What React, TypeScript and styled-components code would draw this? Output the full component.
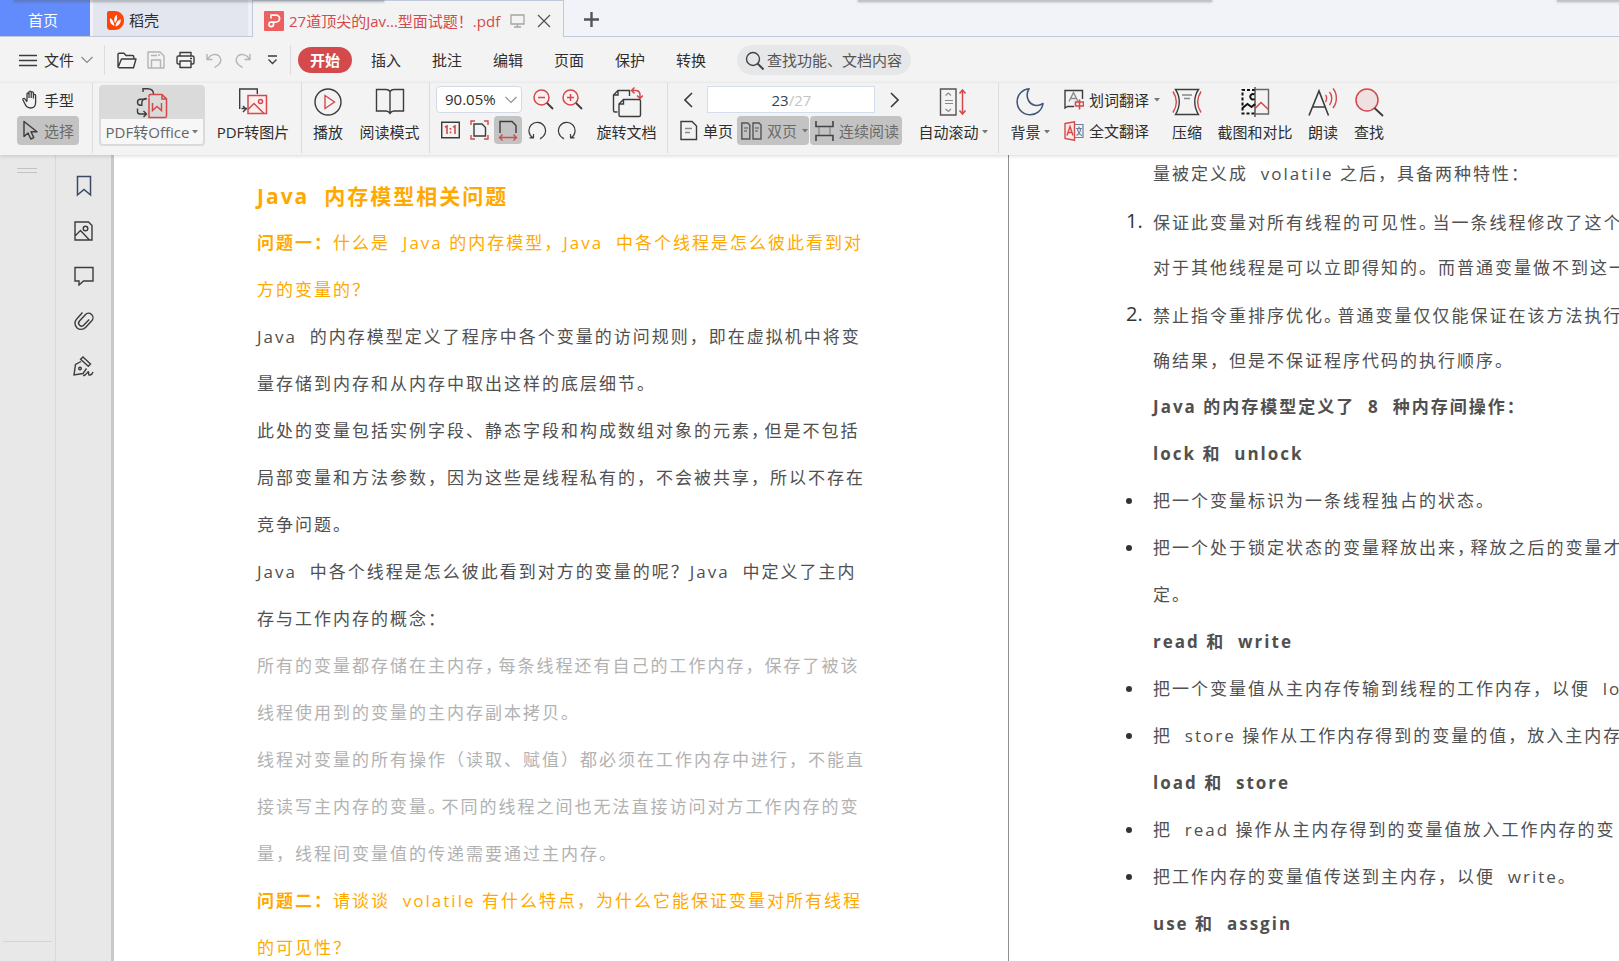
import React from "react";
import styled, { createGlobalStyle, css } from "styled-components";

const INK = "#3c3c3c";
const RED = "#d44a4c";
const FAINT = "#b4b4b4";

const GlobalStyle = createGlobalStyle`
  *, *::before, *::after { box-sizing: border-box; }
  body {
    margin: 0;
    background: #f3f3f3;
    color: #2e2e2e;
    font: 15px/20px "Open Sans", "Noto Sans CJK SC", sans-serif;
  }
  button, input, select { font: inherit; color: inherit; }
  button { padding: 0; border: 0; background: none; cursor: pointer; white-space: nowrap; }
  h1, h2, p, ol, ul { margin: 0; padding: 0; }
  svg { display: block; flex: none; }
`;

/* ---------- icons ---------- */

type SvgProps = { w: number; h: number; color?: string; sw?: number; children: React.ReactNode };

const Svg = ({ w, h, color = INK, sw = 1.4, children }: SvgProps) => (
  <svg width={w} height={h} viewBox={`0 0 ${w} ${h}`} fill="none" stroke={color} strokeWidth={sw} aria-hidden="true">
    {children}
  </svg>
);

const DocerLogo = () => (
  <svg width="17" height="19" viewBox="0 0 17 19" aria-hidden="true">
    <path d="M2 0h6c5 0 9 4 9 9.500s-4 9.500-9 9.500H3c-1.600 0-3-1.400-3-3V2c0-1.100.9-2 2-2z" fill="#ff4405" />
    <path d="M7.500 15C3.500 13.500 2.500 10.500 3 7c2.500 1.500 4 4 4.500 8zM8 12C6.500 9 7 6 9.500 3.500c1.200 3 .8 6-1.500 8.500zM8.500 15.500c.3-4 2-6.300 5.300-7.300.2 3.600-1.600 6.300-5.300 7.300z" fill="#fff" />
  </svg>
);

const PdfLogo = () => (
  <svg width="20" height="20" viewBox="0 0 20 20" fill="none" aria-hidden="true">
    <rect width="20" height="20" rx="1" fill="#ee5f5f" />
    <path d="M7 7.500V4.200h5.200a3.400 3.400 0 0 1 0 6.800H9.500v2.500a2.300 2.300 0 1 1-2.300-2.400H12" stroke="#fff" strokeWidth="1.700" />
  </svg>
);

const MonitorIcon = () => (
  <Svg w={15} h={14} color="#a5a5a5" sw={1.3}><path d="M1 1h13v9H1zM7.500 10v3M4 13h7" /></Svg>
);
const CloseIcon = () => (
  <Svg w={14} h={14} color="#555" sw={1.3}><path d="M1 1l12 12M13 1L1 13" /></Svg>
);
const PlusIcon = () => (
  <Svg w={15} h={15} color="#555" sw={2.4}><path d="M7.500 0v15M0 7.500h15" /></Svg>
);
const MenuIcon = () => (
  <Svg w={18} h={13} sw={1.4}><path d="M0 1.500h18M0 6.500h18M0 11.500h18" /></Svg>
);
const ChevronDown = ({ color = "#888" }: { color?: string }) => (
  <Svg w={12} h={8} color={color} sw={1.2}><path d="M.5 1l5.500 5.500L11.500 1" /></Svg>
);
const FolderIcon = () => (
  <Svg w={20} h={17}><path d="M1 15.500V2.500c0-.8.500-1.300 1.300-1.300H7L9 3.500h6.500c.8 0 1.300.5 1.300 1.300V7M1 15.500L4.500 7H19l-2.500 8.700H1.500" strokeLinejoin="round" /></Svg>
);
const SaveIcon = () => (
  <Svg w={18} h={18} color={FAINT}><path d="M1 1h12l4 4v12H1zM4.500 17V9h9v8M4 4.500h6M12 3v2" strokeLinejoin="round" /></Svg>
);
const PrintIcon = () => (
  <Svg w={19} h={18}><path d="M4 5V1.500h11V5M4 13H2.500C1.600 13 1 12.400 1 11.500v-5C1 5.600 1.600 5 2.500 5h14c.9 0 1.500.6 1.500 1.500v5c0 .9-.6 1.500-1.500 1.500H15M4 10h11v6.500H4zM14 7.500h2" strokeLinejoin="round" /></Svg>
);
const UndoIcon = ({ flip = false }: { flip?: boolean }) => (
  <Svg w={16} h={15} color={FAINT}>
    <g transform={flip ? "matrix(-1 0 0 1 16 0)" : undefined}><path d="M1 1v5.500h5.500M1.500 6C5 1 10 .5 12.800 2.800c3 2.600 2.500 6.700-.3 8.900L8.500 14.500" /></g>
  </Svg>
);
const MoreIcon = () => (
  <Svg w={11} h={10} sw={1.3}><path d="M1 1h9M1.500 4.500l4 4 4-4" /></Svg>
);
const SearchIcon = () => (
  <Svg w={19} h={19} color="#444"><circle cx="8" cy="8" r="6.500" /><path d="M12.500 12.500l6 6" strokeWidth="2" /></Svg>
);
const CaretIcon = () => (
  <svg width="6" height="4" viewBox="0 0 6 4" aria-hidden="true"><path d="M0 0h6L3 3.500z" fill="#777" /></svg>
);
const HandIcon = () => (
  <Svg w={17} h={19} sw={1.3}><path d="M5 11V4.200c0-1.600 2-1.600 2 0V8M7 8V2.300c0-1.700 2.200-1.700 2.200 0V8M9.200 8V3c0-1.600 2.200-1.600 2.200 0v5.500M11.400 8.500v-3c0-1.600 2.200-1.600 2.200 0v7c0 3.500-2 5.500-5 5.500-3.200 0-4.600-1.600-5.600-4L1 10c-.6-1.500 1.200-2.200 2-1l2 3" strokeLinejoin="round" /></Svg>
);
const ArrowIcon = () => (
  <Svg w={17} h={21}><path d="M2 1.500v15l4-3.500 2.800 6 3-1.400L9 11.800h6z" strokeLinejoin="round" /></Svg>
);
const ToOfficeIcon = () => (
  <Svg w={32} h={32}>
    <path d="M7 5V1.700h4.500c4 0 6 2 6 5.300M10.500 12.300H4.500c-2 0-3 1-3 3s1 3 3 3h1.300V16c0-3 2-4.500 5-4.500M1.500 21.500v3c0 1.600.9 2.500 2.500 2.500h6M7.500 24l3 3-3 3" />
    <g stroke={RED} strokeWidth="1.500"><path d="M13 10.500V9c0-1 .6-1.600 1.600-1.600H26l4.500 4.500v17c0 1-.6 1.600-1.600 1.600H13V11M26 7.500V12h4.500" /><path d="M16.500 16v7.500l4.500-4 4.500 4V16" /></g>
  </Svg>
);
const ToImageIcon = () => (
  <Svg w={30} h={30}>
    <path d="M9 21.500H3.500M1.700 22V2h17.600v5M5 19l3 3-3 3" />
    <g stroke={RED} strokeWidth="1.500"><path d="M10 8.500h18.500v18H10zM10 22.500l6-6 10 10" fill="#fbeeee" /><circle cx="22.500" cy="14.500" r="2" /></g>
  </Svg>
);
const PlayIcon = () => (
  <Svg w={28} h={28}><circle cx="14" cy="14" r="13" /><path d="M11 7.500v13l9.500-6.500z" stroke={RED} /></Svg>
);
const BookIcon = () => (
  <Svg w={30} h={30}><path d="M15 4.500C14 3 12.500 2.500 11 2.500H1.500V24H11c1.800 0 3 .8 4 2.500 1-1.700 2.200-2.500 4-2.500h9.500V2.500H19c-1.500 0-3 .5-4 2zM15 4.500v22" /></Svg>
);
const ZoomIcon = ({ plus = false }: { plus?: boolean }) => (
  <Svg w={21} h={21} color={RED} sw={1.500}>
    <circle cx="8.500" cy="8.500" r="7.500" fill="#fdf0f0" /><path d={plus ? "M5 8.500h7M8.500 5v7" : "M5 8.500h7"} /><path d="M14 14l6 6" stroke={INK} strokeWidth="1.800" />
  </Svg>
);
const ActualIcon = () => (
  <Svg w={19} h={18}><path d="M.7 1.200h17.600v15.600H.7z" /><g stroke={RED} strokeWidth="1.600"><path d="M4 6l2-1v8M12 6l2-1v8M9.500 7v1.700M9.500 10.500v1.700" /></g></Svg>
);
const FitPageIcon = () => (
  <Svg w={19} h={20}><path d="M4 4h8l3.500 3.500V16H4z" /><path d="M1 5V1h4M14 1h4v4M18 15v4h-4M5 19H1v-4" stroke={RED} /></Svg>
);
const FitWidthIcon = () => (
  <Svg w={20} h={21}><path d="M2 13V1.500h12l4 4V13" /><path d="M1.500 17.500h17M4.500 14.500l-3 3 3 3M15.500 14.500l3 3-3 3" stroke={RED} /></Svg>
);
const RotateIcon = ({ flip = false }: { flip?: boolean }) => (
  <Svg w={19} h={19}>
    <g transform={flip ? "matrix(-1 0 0 1 19 0)" : undefined}><path d="M5 16.800a8.300 8.300 0 1 1 7.500.5M1.500 16.800H5.500V13M12 18l1.500-1" strokeWidth="1.200" /></g>
  </Svg>
);
const RotateDocIcon = () => (
  <Svg w={32} h={32}>
    <path d="M6.500 26H4c-1 0-1.500-.5-1.500-1.500V9L7 4.500h11.500V10" /><path d="M8 18l4.500-4.500H28c1 0 1.500.5 1.500 1.500v14c0 1-.5 1.500-1.500 1.500H9.500C8.500 30.500 8 30 8 29zM7 4.500V9H2.500M12.500 13.500V18H8" />
    <path d="M20.500 4.500h4c3 0 4.500 1.600 4.500 4.500v3M23.500 1.500l-3 3 3 3M26 9.500l3 3 3-3" stroke={RED} strokeWidth="1.500" />
  </Svg>
);
const AngleIcon = ({ right = false }: { right?: boolean }) => (
  <Svg w={9} h={16} sw={1.600}><path d={right ? "M1 1l7 7-7 7" : "M8 1L1 8l7 7"} /></Svg>
);
const SinglePageIcon = () => (
  <Svg w={18} h={21}><path d="M1 1.500h11l4.500 4.500v13.500H1z" /><path d="M5 8.500h7M5 12.500h5" stroke="#888" /></Svg>
);
const DoublePageIcon = () => (
  <Svg w={21} h={18} color="#555"><path d="M.8 1h6l2 2v14h-8zM12 1h6l2 2v14h-8z" /><path d="M3 6h4M3 9h3M14 6h4M14 9h3" strokeWidth="1.100" /></Svg>
);
const ContinuousIcon = () => (
  <Svg w={19} h={20} color="#444" sw={1.600}><path d="M1 0v5.500h17V0M1 20v-5.500h17V20" /><path d="M4 6v8M15 6v8" strokeWidth="1" stroke="#777" /></Svg>
);
const AutoScrollIcon = () => (
  <Svg w={28} h={30} color="#555">
    <path d="M1.500 2h15.500v26H1.500z" /><path d="M6 13.500h8M6 16.500h8M6.500 8.500L9.300 6l2.700 2.500M6.500 22L9.300 24.500 12 22" stroke="#888" strokeWidth="1.200" />
    <path d="M23.500 3.500v23M20.500 6.500l3-3.500 3 3.500M20.500 23.500l3 3.500 3-3.500" stroke={RED} strokeWidth="1.500" />
  </Svg>
);
const MoonIcon = () => (
  <Svg w={28} h={30} color="#43557c" sw={1.600}><path d="M13 1.800A13 13 0 1 0 27 16.500c-5.500 3.500-11.500 2.200-14.200-2.500-2.300-4-2.300-8 .2-12.200z" strokeLinejoin="round" /></Svg>
);
const WordTranslateIcon = () => (
  <Svg w={20} h={21}><path d="M10 17.500H3.500L1 19V1.500h17.500V10" /><path d="M5 12.500L9.500 3.500l4.500 9M6.500 9.500h6" stroke="#8a8a8a" /><path d="M11.500 13h8v4h-8zM15.500 10.500V20.500" stroke={RED} strokeWidth="1.600" /></Svg>
);
const FullTranslateIcon = () => (
  <Svg w={20} h={20}><path d="M10.500 3.500H19v13h-8.500M12 7.500h6M15 5.500v2M12.500 14.500c3-1.500 4-4 4-7M13.500 8c.5 3 2 5.500 4.500 6.500" stroke="#6d7f9c" strokeWidth="1.200" /><path d="M1 2.500L10.500.8v18.500L1 17.500z" fill="#fbe9e9" stroke={RED} /><path d="M3 14.500l3-9 3 9M4 11.500h4" stroke={RED} /></Svg>
);
const CompressIcon = () => (
  <Svg w={30} h={30}><path d="M3.500 2.500h23c-5 7.500-5 17 0 25h-23c5-8 5-17.500 0-25z" /><path d="M10 8h10M12 11.500h6" stroke="#888" /><path d="M1 4.500c4.500 7 4.500 14 0 21M29 4.500c-4.500 7-4.500 14 0 21" stroke={RED} /></Svg>
);
const CompareIcon = () => (
  <Svg w={30} h={30}>
    <path d="M15 3H2.500v23.500H15" stroke="#111" strokeWidth="2" strokeDasharray="3 2" /><path d="M15 0v30" strokeWidth="1.300" /><path d="M15 2.500h13.500V27H15" stroke="#666" />
    <path d="M2.500 21l5-4 4 3 3.500-3M14.500 7.500a2.700 2.700 0 1 0 0 4.500" stroke="#111" strokeWidth="1.900" /><path d="M15 21.500l6-6 7.500 7" stroke={RED} strokeWidth="1.600" />
  </Svg>
);
const ReadAloudIcon = () => (
  <Svg w={30} h={30}><path d="M1 28.500L11 4l9.500 24.500M4.500 20h13" strokeWidth="1.600" /><path d="M17.500 8c1.500 1.500 1.500 5 0 7M21.500 5c3 3.500 3 9 0 13M25 1.500c4.500 5 4.500 13.500 0 19.500" stroke={RED} /></Svg>
);
const FindIcon = () => (
  <Svg w={30} h={30}><circle cx="13" cy="13" r="11" fill="#efe1e1" stroke={RED} strokeWidth="1.500" /><path d="M20.500 21L29 29" strokeWidth="1.800" /></Svg>
);
const BookmarkIcon = () => (
  <Svg w={16} h={22} color="#3b4763" sw={1.500}><path d="M1.500 1.500h13V20L8 14.500 1.500 20z" /></Svg>
);
const ThumbIcon = () => (
  <Svg w={19} h={20}><path d="M1 1h13.500L18 4.500V19H1zM1 15l5.500-5.500L15.500 19" /><circle cx="11.500" cy="7.500" r="2.300" /></Svg>
);
const CommentIcon = () => (
  <Svg w={20} h={20}><path d="M1 1.500h18V15H9.500l-4.500 4v-4H1z" /></Svg>
);
const ClipIcon = () => (
  <Svg w={20} h={20}><path d="M8.500 1.500L2.700 8a6 6 0 0 0 8.800 8.500l6.300-6.800a4.400 4.400 0 0 0-6.500-6L5.500 9.900a3 3 0 0 0 4.400 4.200l5.300-5.700" /></Svg>
);
const PenIcon = () => (
  <Svg w={21} h={21}><path d="M10 1l7.500 7-2.200 2.300-7.700-7zM8 5.500L2.500 8.500 1 19l9-1.500 3.500-5" /><circle cx="7" cy="12.500" r="1.300" /><path d="M10 19.500c3 .8 5-5 5.500-3.500s-.5 3.500 1.500 3 2.500-1.500 3-3" /></Svg>
);

/* ---------- window frame ---------- */

const Shell = styled.div`
  display: flex;
  flex-direction: column;
  height: 100vh;
  overflow: hidden;
`;

const TabBar = styled.nav`
  position: relative;
  display: flex;
  height: 37px;
  background: #f2f3f8;
  box-shadow: inset 0 -1px #c1c9da;
`;

const EdgeShade = styled.i<{ $left: number; $width: number }>`
  position: absolute;
  top: -2px;
  left: ${(p) => p.$left}px;
  width: ${(p) => p.$width}px;
  height: 4px;
  background: rgba(90, 90, 90, 0.3);
  box-shadow: 0 0 3px rgba(90, 90, 90, 0.4);
  pointer-events: none;
`;

const HomeTab = styled.button`
  width: 90px;
  height: 36px;
  padding: 4px 4px 0 0;
  background: #628cfb;
  color: #fff;
`;

const Tab = styled.button`
  display: flex;
  align-items: center;
  gap: 5px;
  width: 159px;
  height: 36px;
  margin-left: 3px;
  padding: 4px 14px 0;
  border-right: 4px solid #edf0f6;
  background: #e3e6ef;
`;

const ActiveTab = styled.div`
  display: flex;
  align-items: center;
  width: 312px;
  padding: 4px 0 0 11px;
  border: solid #c1c9da;
  border-width: 1px 1px 0;
  background: #f3f3f3;
  color: ${RED};
  white-space: nowrap;
`;

const TabTitle = styled.span`
  flex: 1;
  margin-left: 5px;
`;

const IconButton = styled.button<{ $w?: number; $h?: number; $on?: boolean }>`
  display: flex;
  align-items: center;
  justify-content: center;
  width: ${(p) => p.$w ?? 28}px;
  height: ${(p) => p.$h ?? 28}px;
  border-radius: 4px;
  background: ${(p) => (p.$on ? "#c3c3c3" : "transparent")};
`;

/* ---------- menu row ---------- */

const MenuBar = styled.div`
  display: flex;
  align-items: center;
  height: 46px;
  padding-left: 19px;
`;

const FileButton = styled.button`
  display: flex;
  align-items: center;
  gap: 7px;
  margin-right: 11px;
`;

const Divider = styled.span<{ $h: number }>`
  flex: none;
  width: 1px;
  height: ${(p) => p.$h}px;
  background: #dcdcdc;
`;

const QuickTools = styled.div`
  display: flex;
  gap: 1px;
  padding: 0 4px 0 8px;
`;

const MenuTabs = styled.div`
  display: flex;
  align-items: center;
  gap: 31px;
  padding-left: 7px;
`;

const MenuItem = styled.button<{ $active?: boolean }>`
  height: 26px;
  ${(p) =>
    p.$active &&
    css`
      width: 54px;
      margin-right: -12px;
      border-radius: 13px;
      background: ${RED};
      color: #fff;
      font-weight: 700;
    `}
`;

const SearchField = styled.label`
  display: flex;
  align-items: center;
  gap: 3px;
  width: 174px;
  height: 30px;
  margin-left: 31px;
  padding: 0 8px;
  border-radius: 15px;
  background: #e6e7e9;
  input {
    flex: 1;
    min-width: 0;
    padding: 0;
    border: 0;
    outline: 0;
    background: none;
  }
  input::placeholder { color: #555; opacity: 1; }
`;

/* ---------- ribbon ---------- */

const Ribbon = styled.div`
  position: relative;
  z-index: 1;
  display: flex;
  height: 72px;
  padding-left: 17px;
  background: #f3f3f3;
  box-shadow: 0 1px 4px rgba(0, 0, 0, 0.16);
`;

const Group = styled.div<{ $gap?: number }>`
  display: flex;
  gap: ${(p) => p.$gap ?? 6}px;
  padding: 2px 6px 0;
  &:first-child { padding: 2px 13px 0 0; }
`;

const Stack = styled.div<{ $w?: number; $gap?: number }>`
  display: flex;
  flex-direction: column;
  gap: ${(p) => p.$gap ?? 2}px;
  width: ${(p) => (p.$w ? `${p.$w}px` : "auto")};
`;

const Line = styled.div<{ $gap?: number }>`
  display: flex;
  align-items: center;
  gap: ${(p) => p.$gap ?? 1}px;
`;

const BigTool = styled.button<{ $w: number }>`
  display: flex;
  flex-direction: column;
  align-items: center;
  width: ${(p) => p.$w}px;
  height: 61px;
`;

const BigIcon = styled.span`
  display: flex;
  align-items: center;
  justify-content: center;
  width: 100%;
  height: 34px;
`;

const BigLabel = styled.span`
  display: flex;
  align-items: center;
  justify-content: center;
  gap: 3px;
  width: 100%;
  height: 25px;
`;

const SplitTool = styled(BigTool)`
  border: 2px solid #dadada;
  border-radius: 4px;
  background: #f7f7f7;
  color: #666;
  ${BigIcon} { height: 32px; background: #dadada; }
`;

const SmallTool = styled.button<{ $w: number; $on?: boolean; $pad?: number }>`
  display: flex;
  align-items: center;
  gap: 5px;
  width: ${(p) => p.$w}px;
  height: 29px;
  padding-left: ${(p) => p.$pad ?? 5}px;
  border-radius: 4px;
  background: ${(p) => (p.$on ? "#c3c3c3" : "transparent")};
  color: ${(p) => (p.$on ? "#6b6b6b" : "inherit")};
`;

const Combo = styled.label`
  position: relative;
  width: 86px;
  height: 27px;
  margin-right: 6px;
  select {
    width: 100%;
    height: 100%;
    padding: 0 8px;
    border: 1px solid #d4d9e6;
    border-radius: 4px;
    appearance: none;
    background: #fff;
  }
  svg { position: absolute; right: 5px; top: 10px; pointer-events: none; }
`;

const PageBox = styled.label`
  display: flex;
  flex: 1;
  align-items: center;
  justify-content: center;
  height: 27px;
  border: 1px solid #d4ddec;
  background: #fff;
  color: #c4c4c4;
  input {
    width: 18px;
    padding: 0;
    border: 0;
    outline: 0;
    background: none;
    color: #2f4360;
    text-align: right;
  }
`;

/* ---------- workspace ---------- */

const Workspace = styled.div`
  display: flex;
  flex: 1;
  min-height: 0;
`;

const Gutter = styled.div`
  display: flex;
  flex-direction: column;
  justify-content: space-between;
  width: 56px;
  padding: 13px 3px 19px;
  border-right: 1px solid #d8d8d8;
  background: #e8e8e8;
`;

const Grip = styled.span`
  width: 20px;
  height: 5px;
  margin-left: 14px;
  border: solid #c2c2c2;
  border-width: 1px 0;
`;

const Rule = styled.span`
  height: 1px;
  background: #d4d4d4;
`;

const SideBar = styled.aside`
  display: flex;
  flex-direction: column;
  align-items: center;
  gap: 17px;
  width: 58px;
  padding-top: 17px;
  border-right: 3px solid #c9c9cd;
  background: #e8e8e8;
`;

const Spread = styled.main`
  display: grid;
  flex: 1;
  grid-template-columns: minmax(0, 895fr) minmax(0, 610fr);
  min-width: 0;
`;

const Page = styled.article<{ $scrolled?: boolean }>`
  overflow: hidden;
  padding: ${(p) => (p.$scrolled ? "0 0 0 144px" : "18px 0 0 143px")};
  border-right: ${(p) => (p.$scrolled ? "0" : "1px solid #8f8f8f")};
  background: #fff;
  color: #505050;
  font-size: 17px;
  line-height: 47px;
  letter-spacing: 2px;
  white-space: pre;
`;

const Scroll = styled.div`
  margin-top: -5px;
`;

const Row = styled.span`
  display: block;
`;

const Title = styled.h1`
  color: #ffa900;
  font-size: 21px;
  line-height: 46px;
`;

const Question = styled.p`
  color: #ffa900;
`;

const Quote = styled.p`
  color: #b2b2b2;
`;

const Heading = styled.h2`
  font-size: 17px;
  font-weight: 700;
`;

const Steps = styled.ol`
  margin-left: -27px;
  line-height: 45px;
  list-style: none;
  counter-reset: step;
  li {
    display: flex;
    padding-top: 3px;
    counter-increment: step;
  }
  li::before {
    content: counter(step) ".";
    flex: none;
    width: 27px;
    color: #333;
    font-size: 20px;
    line-height: 42px;
    letter-spacing: 0;
  }
`;

const Bullets = styled.ul`
  margin-left: -27px;
  list-style: none;
  li { display: flex; }
  li::before {
    content: "";
    flex: none;
    width: 6px;
    height: 6px;
    margin: 21px 21px 0 0;
    border-radius: 50%;
    background: #333;
  }
`;

/* half-width form of a full-width comma or stop */
const Tight = styled.span`
  padding-right: 3px;
  line-height: 1;
  font-feature-settings: "halt";
`;

type ToolProps = { w: number; icon: React.ReactNode; label: string; caret?: boolean };

const Tool = ({ w, icon, label, caret }: ToolProps) => (
  <BigTool $w={w}>
    <BigIcon>{icon}</BigIcon>
    <BigLabel>{label}{caret && <CaretIcon />}</BigLabel>
  </BigTool>
);

const menus = ["插入", "批注", "编辑", "页面", "保护", "转换"];

export default function App() {
  return (
    <Shell>
      <GlobalStyle />
      <TabBar>
        <HomeTab>首页</HomeTab>
        <Tab><DocerLogo />稻壳</Tab>
        <ActiveTab>
          <PdfLogo />
          <TabTitle>27道顶尖的Jav...型面试题！.pdf</TabTitle>
          <MonitorIcon />
          <IconButton $w={38} aria-label="关闭"><CloseIcon /></IconButton>
        </ActiveTab>
        <IconButton $w={54} $h={38} aria-label="新建标签"><PlusIcon /></IconButton>
        <EdgeShade $left={14} $width={370} />
        <EdgeShade $left={858} $width={354} />
        <EdgeShade $left={1557} $width={62} />
      </TabBar>

      <MenuBar>
        <FileButton><MenuIcon />文件<ChevronDown /></FileButton>
        <Divider $h={30} />
        <QuickTools>
          <IconButton aria-label="打开"><FolderIcon /></IconButton>
          <IconButton aria-label="保存"><SaveIcon /></IconButton>
          <IconButton aria-label="打印"><PrintIcon /></IconButton>
          <IconButton aria-label="撤销"><UndoIcon /></IconButton>
          <IconButton aria-label="恢复"><UndoIcon flip /></IconButton>
          <IconButton aria-label="更多"><MoreIcon /></IconButton>
        </QuickTools>
        <Divider $h={30} />
        <MenuTabs>
          <MenuItem $active>开始</MenuItem>
          {menus.map((m) => <MenuItem key={m}>{m}</MenuItem>)}
        </MenuTabs>
        <SearchField>
          <SearchIcon />
          <input type="text" aria-label="搜索" placeholder="查找功能、文档内容" />
        </SearchField>
      </MenuBar>

      <Ribbon>
        <Group>
          <Stack>
            <SmallTool $w={62}><HandIcon />手型</SmallTool>
            <SmallTool $w={62} $on><ArrowIcon />选择</SmallTool>
          </Stack>
        </Group>
        <Divider $h={70} />
        <Group>
          <SplitTool $w={106}>
            <BigIcon><ToOfficeIcon /></BigIcon>
            <BigLabel>PDF转Office<CaretIcon /></BigLabel>
          </SplitTool>
          <Tool w={84} icon={<ToImageIcon />} label="PDF转图片" />
        </Group>
        <Divider $h={70} />
        <Group $gap={8}>
          <Tool w={40} icon={<PlayIcon />} label="播放" />
          <Tool w={67} icon={<BookIcon />} label="阅读模式" />
        </Group>
        <Divider $h={70} />
        <Group>
          <Stack $gap={3}>
            <Line>
              <Combo>
                <select aria-label="缩放比例" defaultValue="90.05%"><option>90.05%</option></select>
                <ChevronDown color="#8790a5" />
              </Combo>
              <IconButton aria-label="缩小"><ZoomIcon /></IconButton>
              <IconButton aria-label="放大"><ZoomIcon plus /></IconButton>
            </Line>
            <Line>
              <IconButton aria-label="实际大小"><ActualIcon /></IconButton>
              <IconButton aria-label="适合页面"><FitPageIcon /></IconButton>
              <IconButton $on aria-label="适合宽度"><FitWidthIcon /></IconButton>
              <IconButton aria-label="向左旋转"><RotateIcon /></IconButton>
              <IconButton aria-label="向右旋转"><RotateIcon flip /></IconButton>
            </Line>
          </Stack>
          <Tool w={69} icon={<RotateDocIcon />} label="旋转文档" />
        </Group>
        <Divider $h={70} />
        <Group>
          <Stack $w={234}>
            <Line $gap={5}>
              <IconButton $h={29} aria-label="上一页"><AngleIcon /></IconButton>
              <PageBox><input type="text" aria-label="页码" defaultValue="23" />/27</PageBox>
              <IconButton $h={29} aria-label="下一页"><AngleIcon right /></IconButton>
            </Line>
            <Line>
              <SmallTool $w={62} $pad={6}><SinglePageIcon />单页</SmallTool>
              <SmallTool $w={72} $pad={4} $on><DoublePageIcon />双页<CaretIcon /></SmallTool>
              <SmallTool $w={92} $pad={5} $on><ContinuousIcon />连续阅读</SmallTool>
            </Line>
          </Stack>
          <Tool w={78} icon={<AutoScrollIcon />} label="自动滚动" caret />
        </Group>
        <Divider $h={70} />
        <Group>
          <Tool w={50} icon={<MoonIcon />} label="背景" caret />
          <Stack>
            <SmallTool $w={99} $pad={3}><WordTranslateIcon />划词翻译<CaretIcon /></SmallTool>
            <SmallTool $w={99} $pad={3}><FullTranslateIcon />全文翻译</SmallTool>
          </Stack>
          <Tool w={42} icon={<CompressIcon />} label="压缩" />
          <Tool w={82} icon={<CompareIcon />} label="截图和对比" />
          <Tool w={42} icon={<ReadAloudIcon />} label="朗读" />
          <Tool w={38} icon={<FindIcon />} label="查找" />
        </Group>
      </Ribbon>

      <Workspace>
        <Gutter><Grip /><Rule /></Gutter>
        <SideBar>
          <IconButton aria-label="书签"><BookmarkIcon /></IconButton>
          <IconButton aria-label="缩略图"><ThumbIcon /></IconButton>
          <IconButton aria-label="批注"><CommentIcon /></IconButton>
          <IconButton aria-label="附件"><ClipIcon /></IconButton>
          <IconButton aria-label="签名"><PenIcon /></IconButton>
        </SideBar>

        <Spread>
          <Page>
            <Title>{"Java  内存模型相关问题"}</Title>
            <Question>
              <Row><b>问题一：</b>{"什么是  Java 的内存模型，Java  中各个线程是怎么彼此看到对"}</Row>
              <Row>方的变量的？</Row>
            </Question>
            <p>
              <Row>{"Java  的内存模型定义了程序中各个变量的访问规则，即在虚拟机中将变"}</Row>
              <Row>量存储到内存和从内存中取出这样的底层细节。</Row>
            </p>
            <p>
              <Row>此处的变量包括实例字段、静态字段和构成数组对象的元素<Tight>，</Tight>但是不包括</Row>
              <Row>局部变量和方法参数，因为这些是线程私有的，不会被共享，所以不存在</Row>
              <Row>竞争问题。</Row>
            </p>
            <p>
              <Row>{"Java  中各个线程是怎么彼此看到对方的变量的呢？Java  中定义了主内"}</Row>
              <Row>存与工作内存的概念：</Row>
            </p>
            <Quote>
              <Row>所有的变量都存储在主内存<Tight>，</Tight>每条线程还有自己的工作内存，保存了被该</Row>
              <Row>线程使用到的变量的主内存副本拷贝。</Row>
            </Quote>
            <Quote>
              <Row>线程对变量的所有操作（读取、赋值）都必须在工作内存中进行，不能直</Row>
              <Row>接读写主内存的变量<Tight>。</Tight>不同的线程之间也无法直接访问对方工作内存的变</Row>
              <Row>量，线程间变量值的传递需要通过主内存。</Row>
            </Quote>
            <Question>
              <Row><b>问题二：</b>{"请谈谈  volatile 有什么特点，为什么它能保证变量对所有线程"}</Row>
              <Row>的可见性？</Row>
            </Question>
          </Page>

          <Page $scrolled>
            <Scroll>
              <p>{"量被定义成  volatile 之后，具备两种特性："}</p>
              <Steps>
                <li>
                  <p>
                    <Row>保证此变量对所有线程的可见性<Tight>。</Tight>当一条线程修改了这个</Row>
                    <Row>对于其他线程是可以立即得知的。而普通变量做不到这一</Row>
                  </p>
                </li>
                <li>
                  <p>
                    <Row>禁止指令重排序优化<Tight>。</Tight>普通变量仅仅能保证在该方法执行</Row>
                    <Row>确结果，但是不保证程序代码的执行顺序。</Row>
                  </p>
                </li>
              </Steps>
              <Heading>{"Java 的内存模型定义了  8  种内存间操作："}</Heading>
              <Heading>{"lock 和  unlock"}</Heading>
              <Bullets>
                <li><p>把一个变量标识为一条线程独占的状态。</p></li>
                <li>
                  <p>
                    <Row>把一个处于锁定状态的变量释放出来<Tight>，</Tight>释放之后的变量才</Row>
                    <Row>定。</Row>
                  </p>
                </li>
              </Bullets>
              <Heading>{"read 和  write"}</Heading>
              <Bullets>
                <li><p>{"把一个变量值从主内存传输到线程的工作内存，以便  lo"}</p></li>
                <li><p>{"把  store 操作从工作内存得到的变量的值，放入主内存"}</p></li>
              </Bullets>
              <Heading>{"load 和  store"}</Heading>
              <Bullets>
                <li><p>{"把  read 操作从主内存得到的变量值放入工作内存的变"}</p></li>
                <li><p>{"把工作内存的变量值传送到主内存，以便  write。"}</p></li>
              </Bullets>
              <Heading>{"use 和  assgin"}</Heading>
            </Scroll>
          </Page>
        </Spread>
      </Workspace>
    </Shell>
  );
}
